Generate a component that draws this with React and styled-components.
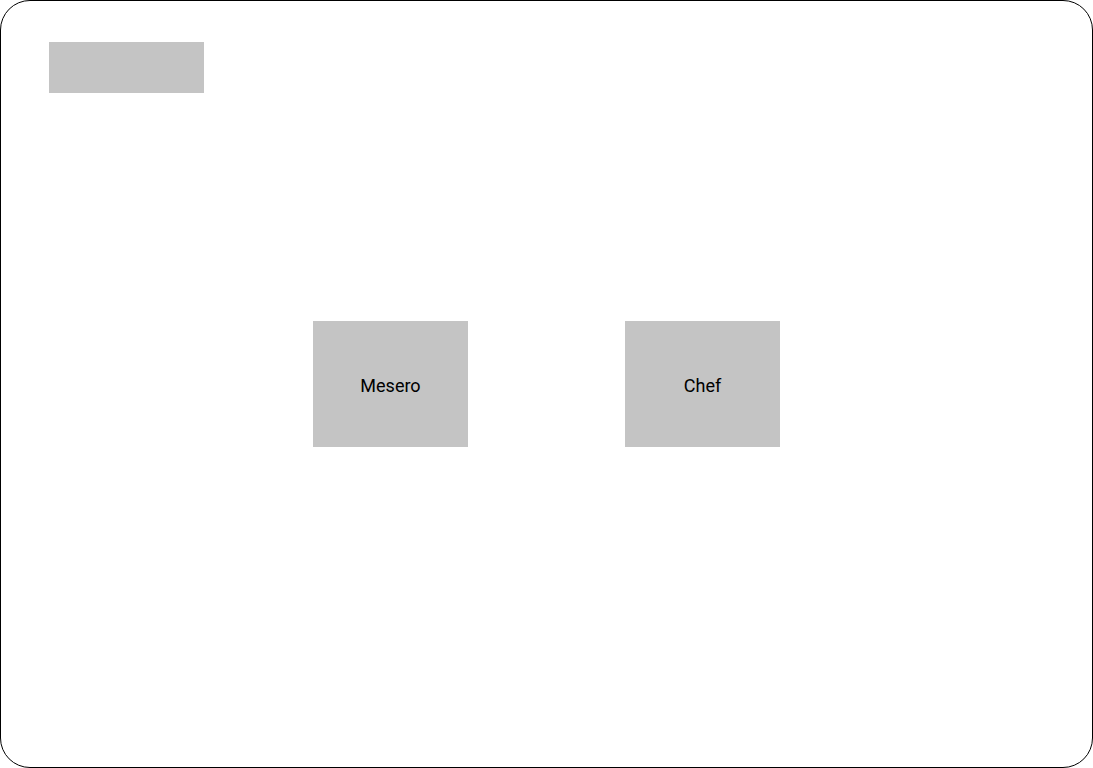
import React from "react";
import styled, { createGlobalStyle } from "styled-components";

const Global = createGlobalStyle`
  html, body {
    margin: 0;
    padding: 0;
    background: #fff;
  }
  * {
    box-sizing: border-box;
  }
`;

export default function App() {
  return (
    <>
      <Global />
      <Frame>
        <Header>
          <Logo />
        </Header>
        <Main>
          <RoleCard>Mesero</RoleCard>
          <RoleCard>Chef</RoleCard>
        </Main>
      </Frame>
    </>
  );
}

const Frame = styled.div`
  width: 1093px;
  height: 768px;
  border: 1px solid #000;
  border-radius: 30px;
  background: #fff;
  padding: 41px 48px;
  display: flex;
  flex-direction: column;
  font-family: Roboto, "Liberation Sans", sans-serif;
`;

const Header = styled.div`
  display: flex;
`;

const Logo = styled.div`
  width: 155px;
  height: 51px;
  background: #c4c4c4;
`;

const Main = styled.div`
  flex: 1;
  margin-bottom: 51px;
  display: flex;
  align-items: center;
  justify-content: center;
  gap: 157px;
`;

const RoleCard = styled.button`
  width: 155px;
  height: 126px;
  border: none;
  padding: 2px 0 0;
  background: #c4c4c4;
  color: #000;
  font-family: Roboto, "Liberation Sans", sans-serif;
  font-size: 18px;
  display: flex;
  align-items: center;
  justify-content: center;
  cursor: pointer;
`;
